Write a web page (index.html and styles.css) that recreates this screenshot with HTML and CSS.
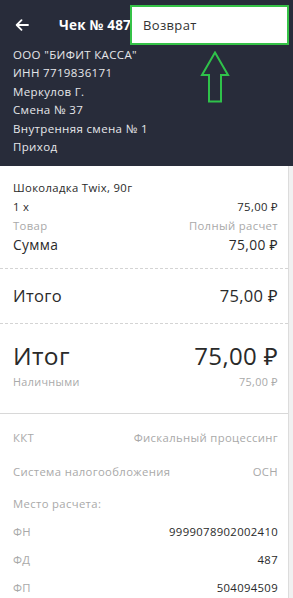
FILE: index.html
```html
<!DOCTYPE html>
<html lang="ru">
<head>
<meta charset="utf-8">
<link rel="stylesheet" href="styles.css">
</head>
<body>
<div class="screen">
  <header class="header">
    <div class="title-row">
      <svg class="back" width="14" height="12" viewBox="0 0 14 12"><path d="M13 6H2M6.5 1.2L1.7 6l4.8 4.8" fill="none" stroke="#fff" stroke-width="1.8" stroke-linecap="round" stroke-linejoin="round"/></svg>
      <span class="title">Чек № 487</span>
    </div>
    <div class="info">
      <div>ООО "БИФИТ КАССА"</div>
      <div>ИНН 7719836171</div>
      <div>Меркулов Г.</div>
      <div>Смена № 37</div>
      <div>Внутренняя смена № 1</div>
      <div>Приход</div>
    </div>
    <div class="menu">Возврат</div>
    <svg class="hint" width="30" height="52" viewBox="0 0 30 52"><path d="M15 1.5L2 24H9V50.5H21V24H28Z" fill="none" stroke="#2fc24a" stroke-width="2" stroke-linejoin="miter"/></svg>
  </header>
  <main class="body">
    <section class="item">
      <div class="name">Шоколадка Twix, 90г</div>
      <div class="row"><span>1 x</span><span>75,00 ₽</span></div>
      <div class="row muted"><span>Товар</span><span>Полный расчет</span></div>
      <div class="row sum"><span>Сумма</span><span>75,00 ₽</span></div>
    </section>
    <section class="total dashed">
      <div class="row itogo"><span>Итого</span><span>75,00 ₽</span></div>
    </section>
    <section class="grand dashed">
      <div class="row itog"><span>Итог</span><span class="big">75,00 ₽</span></div>
      <div class="row muted"><span>Наличными</span><span>75,00 ₽</span></div>
    </section>
    <section class="details">
      <div class="row muted d"><span>ККТ</span><span>Фискальный процессинг</span></div>
      <div class="row muted d"><span>Система налогообложения</span><span>ОСН</span></div>
      <div class="row muted f"><span>Место расчета:</span></div>
      <div class="row f"><span class="lbl">ФН</span><span>9999078902002410</span></div>
      <div class="row f"><span class="lbl">ФД</span><span>487</span></div>
      <div class="row f"><span class="lbl">ФП</span><span>504094509</span></div>
    </section>
  </main>
</div>
</body>
</html>
```
FILE: styles.css
```css
* { box-sizing: border-box; margin: 0; padding: 0; }
html, body { width: 293px; height: 598px; overflow: hidden; }
body { background: #f1f1f1; font-family: "Open Sans", "Noto Sans", sans-serif; color: #2a2a2a; letter-spacing: 0.35px; }
.screen { width: 293px; }
.header {
  position: relative;
  background: #282c3a;
  color: #e6e7ea;
  padding: 14px 0 10px 13px;
  height: 166px;
}
.title-row { display: flex; align-items: center; height: 22px; }
.back { margin-left: 2px; }
.title { margin-left: 30px; font-weight: 700; font-size: 13.5px; color: #fff; letter-spacing: 0.2px; }
.info { margin-top: 10px; font-size: 11.5px; line-height: 18.4px; }
.menu {
  position: absolute; left: 130px; top: 5px; width: 159px; height: 40px;
  background: #fff; border: 2px solid #35c247;
  color: #333; font-size: 13px; padding: 0 0 0 11px;
  display: flex; align-items: center;
}
.hint { position: absolute; left: 200px; top: 51px; }
.body {
  background: #fff; width: 289px; border-right: 1px solid #dcdcdc;
  height: 432px; overflow: hidden;
  padding: 0 10px 0 13px;
}
.row { display: flex; justify-content: space-between; align-items: baseline; }
.muted { color: #a9a9a9; }
.item { padding-top: 13px; padding-bottom: 14px; font-size: 11.3px; }
.item .name { line-height: 18px; }
.item .row { line-height: 19px; }
.item .sum { font-size: 13.8px; line-height: 19px; }
.dashed { border-top: 1px dashed #d4d4d4; margin: 0 -10px 0 -13px; padding-left: 13px; padding-right: 10px; }
.total { padding-top: 17px; padding-bottom: 17px; }
.itogo { font-size: 16.5px; line-height: 20px; }
.grand { padding-top: 17px; padding-bottom: 20px; border-bottom: 1px solid #d8d8d8; }
.itog { font-size: 24.5px; line-height: 30px; }
.itog .big { font-size: 24px; }
.grand .muted { font-size: 10.8px; line-height: 22px; }
.details { padding-top: 6px; font-size: 11.3px; }
.d { height: 34.5px; align-items: center; }
.f { height: 28px; align-items: center; color: #2a2a2a; }
.muted.f { color: #a9a9a9; }
.f .lbl { color: #a9a9a9; }
```
